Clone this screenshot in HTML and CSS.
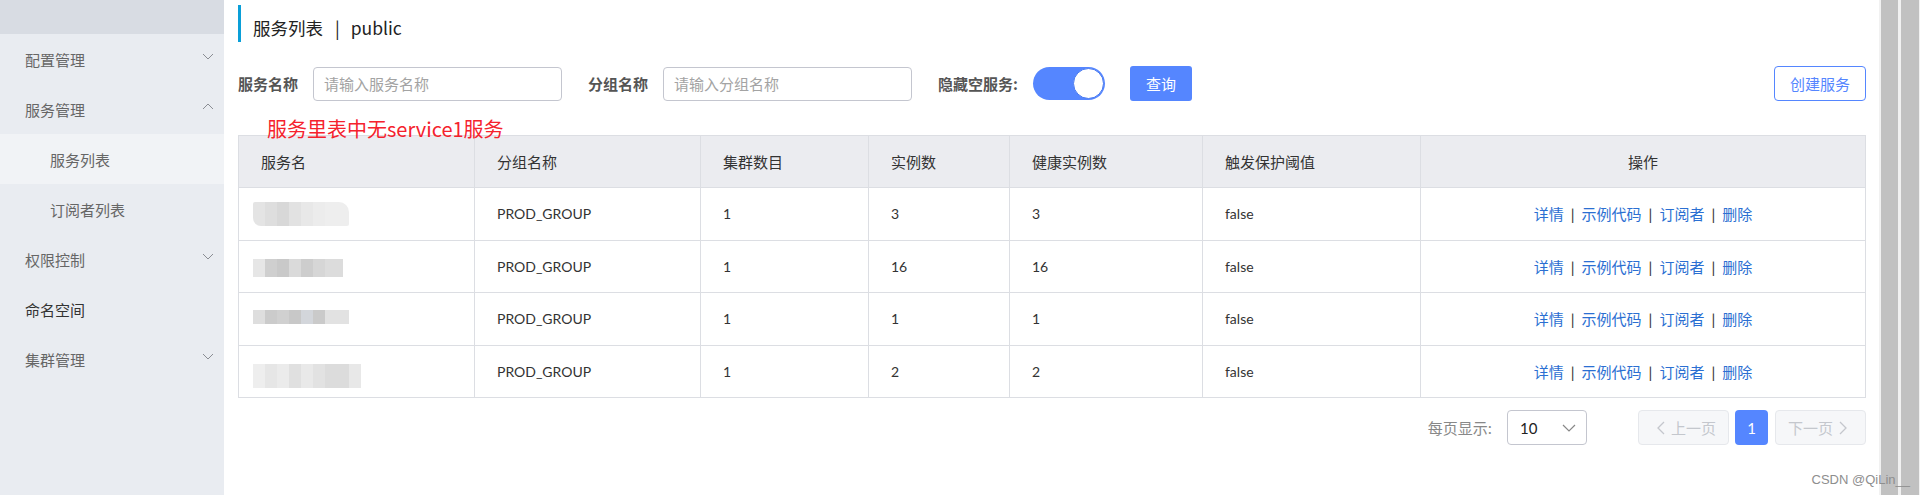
FILE: index.html
```html
<!DOCTYPE html>
<html lang="zh-CN">
<head>
<meta charset="utf-8">
<title>服务列表</title>
<link rel="stylesheet" href="styles.css">
</head>
<body>
<div class="app">
  <aside class="sidebar">
    <div class="logo-area"></div>
    <ul class="menu">
      <li class="item"><span>配置管理</span><svg class="chev" viewBox="0 0 12 7"><polyline points="1,1 6,6 11,1"/></svg></li>
      <li class="item"><span>服务管理</span><svg class="chev" viewBox="0 0 12 7"><polyline points="1,6 6,1 11,6"/></svg></li>
      <li class="item sub active"><span>服务列表</span></li>
      <li class="item sub"><span>订阅者列表</span></li>
      <li class="item"><span>权限控制</span><svg class="chev" viewBox="0 0 12 7"><polyline points="1,1 6,6 11,1"/></svg></li>
      <li class="item dark"><span>命名空间</span></li>
      <li class="item"><span>集群管理</span><svg class="chev" viewBox="0 0 12 7"><polyline points="1,1 6,6 11,1"/></svg></li>
    </ul>
  </aside>

  <main class="main">
    <div class="page-title">
      <span>服务列表</span><span class="sep">|</span><span>public</span>
    </div>

    <div class="filters">
      <label class="label">服务名称</label>
      <input class="input" type="text" placeholder="请输入服务名称">
      <label class="label gap-l">分组名称</label>
      <input class="input" type="text" placeholder="请输入分组名称">
      <label class="label gap-l">隐藏空服务:</label>
      <span class="switch"><span class="knob"></span></span>
      <button class="btn-primary">查询</button>
      <button class="btn-outline">创建服务</button>
    </div>

    <div class="note">服务里表中无service1服务</div>

    <table class="grid">
      <colgroup>
        <col class="c1"><col class="c2"><col class="c3"><col class="c4"><col class="c5"><col class="c6"><col class="c7">
      </colgroup>
      <thead>
        <tr><th>服务名</th><th>分组名称</th><th>集群数目</th><th>实例数</th><th>健康实例数</th><th>触发保护阈值</th><th class="center">操作</th></tr>
      </thead>
      <tbody>
        <tr>
          <td><div class="mosaic m1"></div></td><td>PROD_GROUP</td><td>1</td><td>3</td><td>3</td><td>false</td>
          <td class="center"><a>详情</a><span class="bar">|</span><a>示例代码</a><span class="bar">|</span><a>订阅者</a><span class="bar">|</span><a>删除</a></td>
        </tr>
        <tr>
          <td><div class="mosaic m2"></div></td><td>PROD_GROUP</td><td>1</td><td>16</td><td>16</td><td>false</td>
          <td class="center"><a>详情</a><span class="bar">|</span><a>示例代码</a><span class="bar">|</span><a>订阅者</a><span class="bar">|</span><a>删除</a></td>
        </tr>
        <tr>
          <td><div class="mosaic m3"></div></td><td>PROD_GROUP</td><td>1</td><td>1</td><td>1</td><td>false</td>
          <td class="center"><a>详情</a><span class="bar">|</span><a>示例代码</a><span class="bar">|</span><a>订阅者</a><span class="bar">|</span><a>删除</a></td>
        </tr>
        <tr>
          <td><div class="mosaic m4"></div></td><td>PROD_GROUP</td><td>1</td><td>2</td><td>2</td><td>false</td>
          <td class="center"><a>详情</a><span class="bar">|</span><a>示例代码</a><span class="bar">|</span><a>订阅者</a><span class="bar">|</span><a>删除</a></td>
        </tr>
      </tbody>
    </table>

    <div class="pager">
      <span class="per">每页显示:</span>
      <div class="select"><span>10</span><svg class="sel-chev" viewBox="0 0 14 8"><polyline points="1,1 7,7 13,1"/></svg></div>
      <button class="pg disabled"><svg class="pg-chev" viewBox="0 0 8 14"><polyline points="7,1 1,7 7,13"/></svg>上一页</button>
      <button class="pg current">1</button>
      <button class="pg disabled">下一页<svg class="pg-chev" viewBox="0 0 8 14"><polyline points="1,1 7,7 1,13"/></svg></button>
    </div>
  </main>

  <div class="scrollbars">
    <div class="track"><div class="thumb"></div></div>
    <div class="track"><div class="thumb"></div></div>
  </div>

  <div class="watermark">CSDN @QiLin__</div>
</div>
</body>
</html>
```

FILE: styles.css
```css
html, body {
  margin: 0;
  padding: 0;
}
body {
  width: 1920px;
  height: 495px;
  overflow: hidden;
  font-family: "Lato", "Noto Sans CJK SC", sans-serif;
  color: #333;
  background: #fff;
}

.app {
  display: flex;
  height: 495px;
  position: relative;
}

/* ---------- sidebar ---------- */
.sidebar {
  width: 224px;
  flex: none;
  background: #e9ecf1;
}
.logo-area {
  height: 34px;
  background: #d8dce3;
}
.menu {
  list-style: none;
  margin: 0;
  padding: 0;
}
.item {
  height: 50px;
  display: flex;
  align-items: center;
  justify-content: space-between;
  padding: 0 10px 0 25px;
  font-size: 15px;
  color: #666;
  font-family: "Noto Sans CJK SC", sans-serif;
}
.item.sub {
  padding-left: 50px;
}
.item.active {
  background: #f1f3f6;
}
.item.dark {
  color: #333;
}
.chev {
  width: 12px;
  height: 7px;
  margin-top: -5px;
  fill: none;
  stroke: #8a8d93;
  stroke-width: 1;
}

/* ---------- main ---------- */
.main {
  flex: 1;
  position: relative;
  padding: 5px 13px 0 14px;
  background: #fff;
}
.page-title {
  height: 37px;
  box-sizing: border-box;
  border-left: 3px solid #0a9fd8;
  padding: 11px 0 0 12px;
  font-family: "Noto Sans CJK SC", sans-serif;
  font-size: 17.5px;
  line-height: 24px;
  color: #222;
  display: flex;
}
.page-title .sep {
  margin: 0 11px 0 12px;
}

.filters {
  margin-top: 24px;
  height: 35px;
  display: flex;
  align-items: center;
}
.label {
  font-family: "Noto Sans CJK SC", sans-serif;
  font-size: 15px;
  font-weight: bold;
  color: #555;
  margin-right: 15px;
}
.label.gap-l {
  margin-left: 26px;
}
.input {
  width: 249px;
  height: 34px;
  box-sizing: border-box;
  border: 1px solid #c4c6cf;
  border-radius: 4px;
  padding: 0 10px;
  font-family: "Noto Sans CJK SC", sans-serif;
  font-size: 15px;
  color: #333;
  outline: none;
}
.input::placeholder {
  color: #a3a3a3;
}
.switch {
  width: 72px;
  height: 33px;
  box-sizing: border-box;
  border-radius: 17px;
  background: #5586ff;
  display: flex;
  justify-content: flex-end;
  align-items: center;
  padding-right: 1px;
}
.knob {
  width: 31px;
  height: 31px;
  border-radius: 50%;
  background: #fff;
  box-sizing: border-box;
  border: 1px solid #4c7cf0;
}
.btn-primary {
  margin-left: 25px;
  width: 62px;
  height: 35px;
  border: none;
  border-radius: 3px;
  background: #5586ff;
  color: #fff;
  font-family: "Noto Sans CJK SC", sans-serif;
  font-size: 15px;
  padding: 0;
}
.btn-outline {
  margin-left: auto;
  width: 92px;
  height: 35px;
  box-sizing: border-box;
  border: 1px solid #5586ff;
  border-radius: 4px;
  background: #fff;
  color: #5586ff;
  font-family: "Noto Sans CJK SC", sans-serif;
  font-size: 15px;
  padding: 0;
}

.note {
  position: absolute;
  left: 43px;
  top: 118px;
  font-family: "Noto Sans CJK SC", sans-serif;
  font-size: 20px;
  line-height: 22px;
  color: #f5222d;
  white-space: nowrap;
}

/* ---------- table ---------- */
.grid {
  margin-top: 34px;
  width: 1627px;
  border-collapse: collapse;
  table-layout: fixed;
  font-size: 14px;
}
.c1 { width: 236px; }
.c2 { width: 226px; }
.c3 { width: 168px; }
.c4 { width: 141px; }
.c5 { width: 193px; }
.c6 { width: 218px; }
.c7 { width: 445px; }
.grid th,
.grid td {
  border: 1px solid #dcdee3;
  padding: 0 22px;
  text-align: left;
  font-weight: normal;
  color: #333;
  white-space: nowrap;
}
.grid th {
  height: 51px;
  background: #ebecf0;
  font-family: "Noto Sans CJK SC", sans-serif;
  font-size: 15px;
}
.grid td {
  height: 51.6px;
}
.grid .center {
  text-align: center;
}
.grid a {
  color: #2b6fd2;
  font-family: "Noto Sans CJK SC", sans-serif;
  font-size: 15px;
}
.grid .bar {
  margin: 0 7px;
  color: #333;
  font-size: 15px;
}

.mosaic {
  margin-left: -8px;
  filter: blur(0.6px);
}
.m1 {
  width: 96px;
  height: 24px;
  background:
    linear-gradient(90deg, #e4e4e4 0 12px, #dedede 12px 24px, #d8d8d8 24px 36px, #e2e2e2 36px 48px, #e8e8e8 48px 60px, #ececec 60px 72px, #eeeeee 72px 96px);
  border-radius: 2px 10px 2px 8px;
}
.m2 {
  width: 90px;
  height: 18px;
  margin-top: 4px;
  background:
    linear-gradient(90deg, #e6e6e6 0 12px, #cfcfcf 12px 24px, #c9c9c9 24px 36px, #dadada 36px 48px, #cdcdcd 48px 60px, #d6d6d6 60px 72px, #dcdcdc 72px 90px);
}
.m3 {
  width: 96px;
  height: 14px;
  margin-top: -4px;
  background:
    linear-gradient(90deg, #dedede 0 12px, #cbcbcb 12px 24px, #d0d0d0 24px 36px, #c8c8c8 36px 48px, #d3d6db 48px 60px, #cacaca 60px 72px, #e2e2e2 72px 96px);
}
.m4 {
  width: 108px;
  height: 24px;
  margin-top: 8px;
  background:
    linear-gradient(90deg, #eeeeee 0 12px, #e6e6e6 12px 24px, #ebebeb 24px 36px, #e0e0e0 36px 48px, #e9e9e9 48px 60px, #e2e2e2 60px 72px, #dcdcdc 72px 96px, #e8e8e8 96px 108px);
}

/* ---------- pager ---------- */
.pager {
  margin-top: 12px;
  height: 35px;
  display: flex;
  justify-content: flex-end;
  align-items: center;
}
.per {
  font-family: "Noto Sans CJK SC", sans-serif;
  font-size: 15px;
  color: #888;
  margin-right: 15px;
}
.select {
  width: 80px;
  height: 35px;
  box-sizing: border-box;
  border: 1px solid #c4c6cf;
  border-radius: 4px;
  display: flex;
  align-items: center;
  justify-content: space-between;
  padding: 0 10px 0 12px;
  font-size: 15px;
  color: #222;
  margin-right: 51px;
}
.sel-chev {
  width: 14px;
  height: 8px;
  fill: none;
  stroke: #888;
  stroke-width: 1.2;
}
.pg {
  height: 35px;
  box-sizing: border-box;
  border-radius: 4px;
  font-family: "Noto Sans CJK SC", sans-serif;
  font-size: 15px;
  padding: 0;
  display: flex;
  align-items: center;
  justify-content: center;
}
.pg.disabled {
  width: 91px;
  border: 1px solid #e6e8ec;
  background: #f6f7f9;
  color: #c4c7cd;
}
.pg.current {
  width: 33px;
  margin: 0 7px 0 6px;
  border: none;
  background: #5586ff;
  color: #fff;
  font-family: "Lato", sans-serif;
}
.pg-chev {
  width: 8px;
  height: 14px;
  margin: 0 6px;
  fill: none;
  stroke: #c4c7cd;
  stroke-width: 1.3;
}

/* ---------- scrollbars ---------- */
.scrollbars {
  width: 42px;
  flex: none;
  display: flex;
  background: #f1f1f1;
  padding-left: 2px;
  box-sizing: border-box;
  gap: 3px;
}
.track {
  width: 17px;
  display: flex;
}
.thumb {
  flex: 1;
  background: #c1c1c1;
}
.track + .track {
  width: 18px;
}

.watermark {
  position: absolute;
  right: 10px;
  bottom: 8px;
  font-family: "Liberation Sans", sans-serif;
  font-size: 13px;
  color: #8e8e8e;
  white-space: nowrap;
}
```
